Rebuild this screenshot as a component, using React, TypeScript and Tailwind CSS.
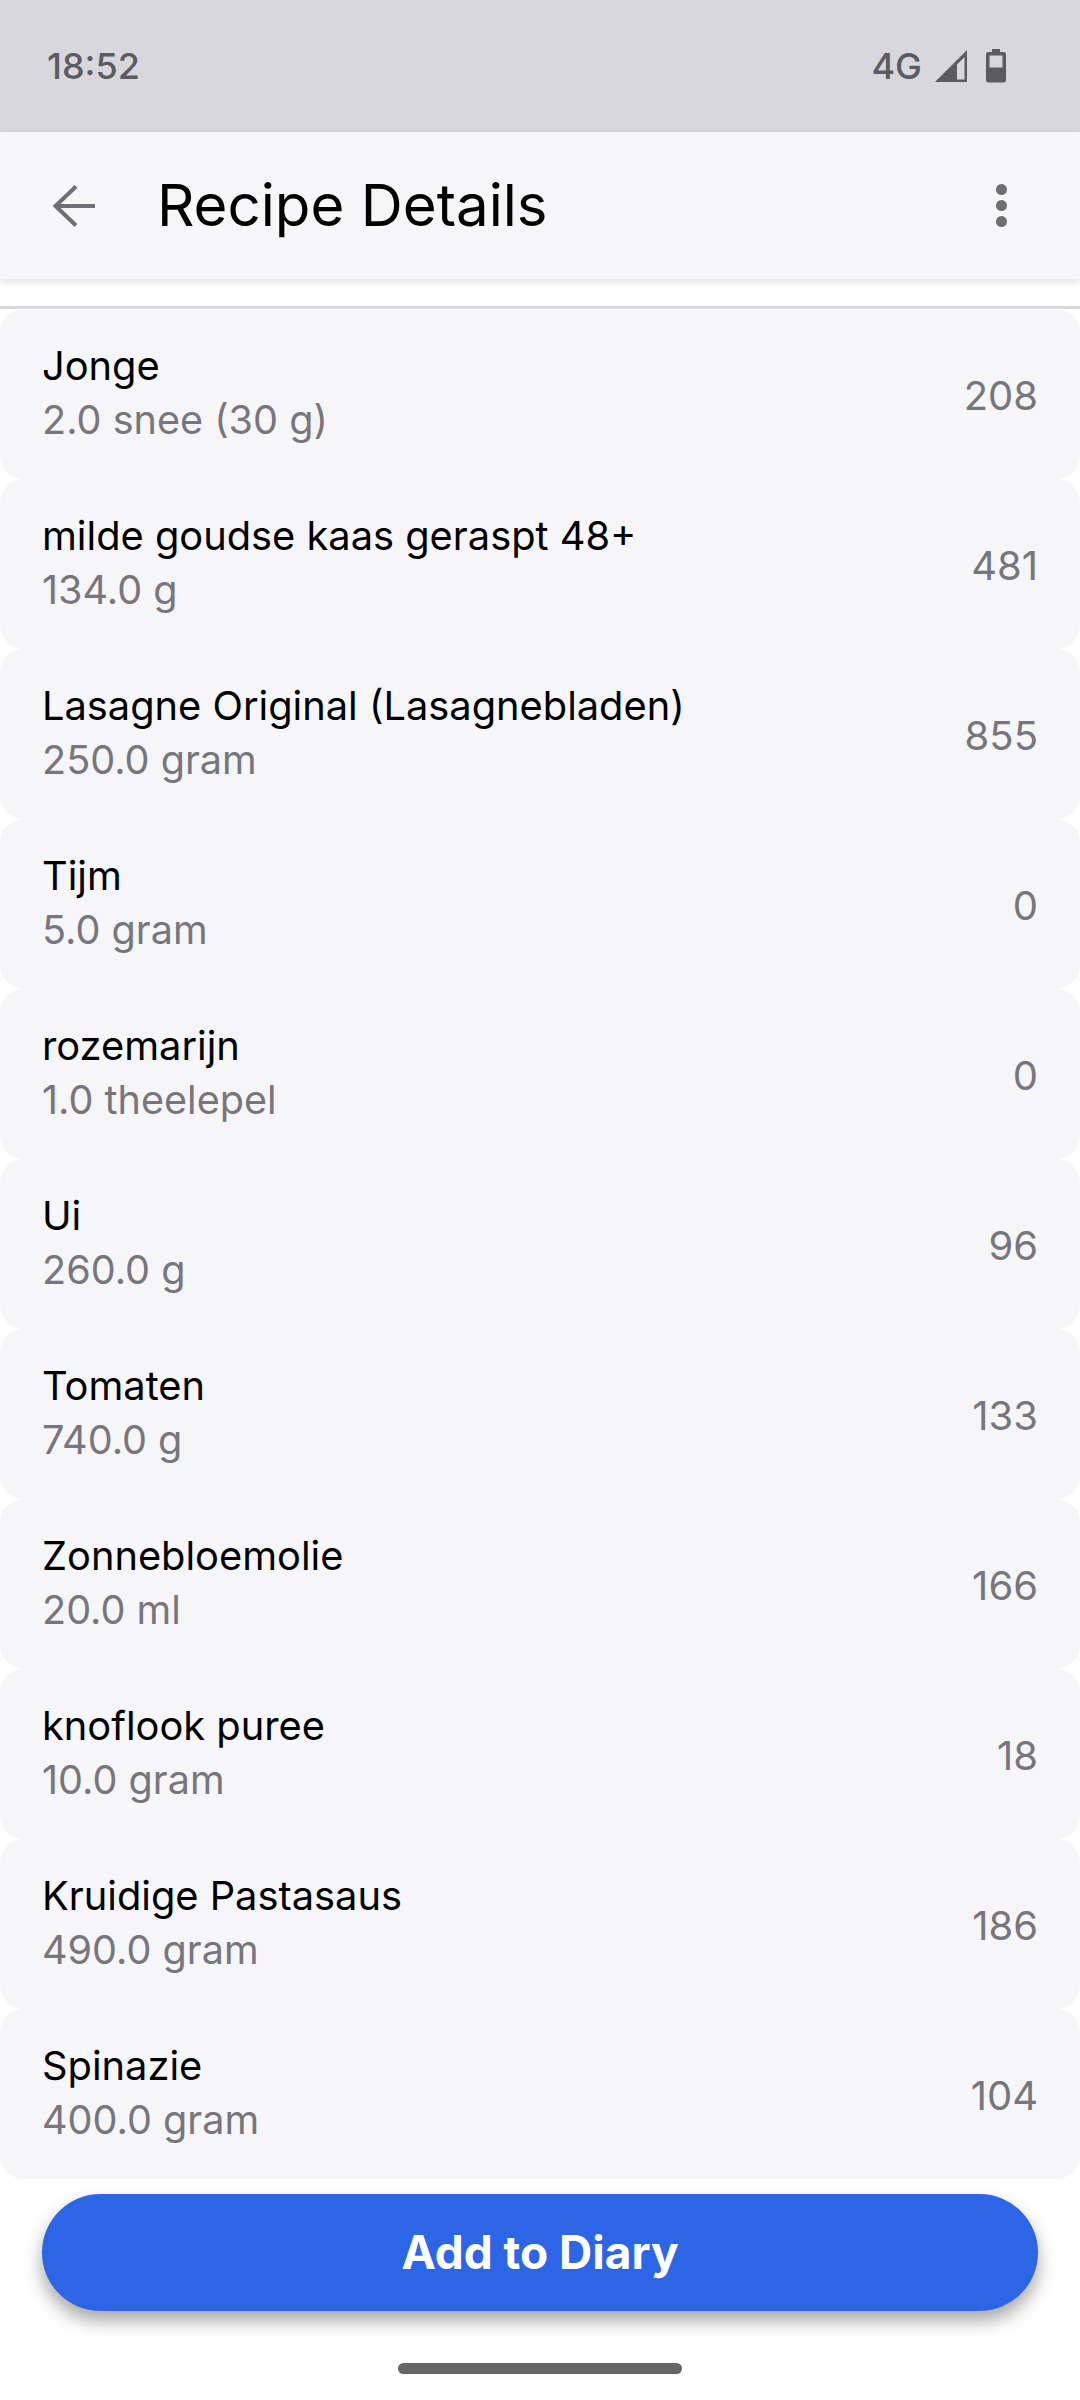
import React from 'react';

const items = [
  { name: 'Jonge', amount: '2.0 snee (30 g)', kcal: '208' },
  { name: 'milde goudse kaas geraspt 48+', amount: '134.0 g', kcal: '481' },
  { name: 'Lasagne Original (Lasagnebladen)', amount: '250.0 gram', kcal: '855' },
  { name: 'Tijm', amount: '5.0 gram', kcal: '0' },
  { name: 'rozemarijn', amount: '1.0 theelepel', kcal: '0' },
  { name: 'Ui', amount: '260.0 g', kcal: '96' },
  { name: 'Tomaten', amount: '740.0 g', kcal: '133' },
  { name: 'Zonnebloemolie', amount: '20.0 ml', kcal: '166' },
  { name: 'knoflook puree', amount: '10.0 gram', kcal: '18' },
  { name: 'Kruidige Pastasaus', amount: '490.0 gram', kcal: '186' },
  { name: 'Spinazie', amount: '400.0 gram', kcal: '104' },
];

function StatusBar() {
  return (
    <div className="h-[132px] bg-[#d8d7dc] flex items-center justify-between pl-[47px] pr-[74px] text-[#5c5c60]">
      <span className="text-[36px] font-medium">18:52</span>
      <div className="flex items-center">
        <span className="text-[36px] font-medium">4G</span>
        <svg width="34" height="34" viewBox="0 0 34 34" className="ml-[12px]">
          <path d="M1 33 L33 1 V33 Z M23 30.5 H30.500 V8 L23 15.500 Z" fill="#5c5c60" fillRule="evenodd" />
        </svg>
        <svg width="20" height="34" viewBox="0 0 20 34" className="ml-[18px]">
          <path d="M6 0 H14 V3 H17.500 Q20 3 20 5.500 V31 Q20 33.500 17.500 33.500 H2.500 Q0 33.500 0 31 V5.500 Q0 3 2.500 3 H6 Z M3.500 6.500 V18.500 H16.500 V6.500 Z" fill="#5c5c60" fillRule="evenodd" />
        </svg>
      </div>
    </div>
  );
}

function AppBar() {
  return (
    <div className="h-[147px] bg-[#f6f6f9] flex items-center pl-[50px] pr-[73px] relative shadow-[0_3px_8px_rgba(0,0,0,0.12)]">
      <svg width="45" height="42" viewBox="0 0 45 42" className="shrink-0" fill="none" stroke="#6f6e74" strokeWidth="4">
        <path d="M45 21 H6 M26 1.500 L5.500 21 L26 40.500" />
      </svg>
      <h1 className="ml-[62px] text-[58.2px] leading-none text-black">Recipe Details</h1>
      <div className="ml-auto flex flex-col gap-[5px]">
        <span className="w-[11px] h-[11px] rounded-full bg-[#6f6e74]" />
        <span className="w-[11px] h-[11px] rounded-full bg-[#6f6e74]" />
        <span className="w-[11px] h-[11px] rounded-full bg-[#6f6e74]" />
      </div>
    </div>
  );
}

export default function App() {
  return (
    <div className="w-[1080px] h-[2400px] bg-white overflow-hidden flex flex-col font-['Inter',sans-serif]">
      <StatusBar />
      <AppBar />
      <div className="mt-[27px] h-[3px] bg-[#d8d7dc]" />
      <div className="flex flex-col">
        {items.map((item) => (
          <div key={item.name} className="h-[170px] bg-[#f6f6f9] rounded-[24px] flex items-center justify-between px-[42px]">
            <div className="pb-[3px]">
              <div className="text-[39.8px] leading-[54px] text-black">{item.name}</div>
              <div className="text-[39.6px] leading-[54px] text-[#77767c]">{item.amount}</div>
            </div>
            <div className="pt-[3px] text-[40px] text-[#77767c]">{item.kcal}</div>
          </div>
        ))}
      </div>
      <div className="h-[158px] px-[42px] pt-[15px] overflow-hidden shrink-0">
        <button className="w-full h-[117px] rounded-full bg-[#2c65e5] text-white text-[46px] font-bold shadow-[0_10px_18px_rgba(0,0,0,0.35)]">
          Add to Diary
        </button>
      </div>
      <div className="mt-[26px] mx-auto w-[284px] h-[11px] rounded-full bg-[#666666]" />
    </div>
  );
}
